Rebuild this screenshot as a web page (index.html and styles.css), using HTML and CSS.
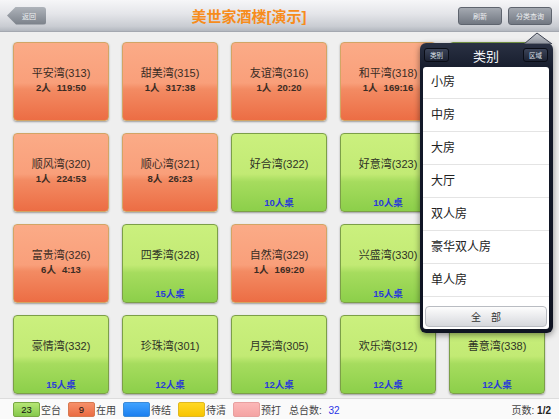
FILE: index.html
```html
<!DOCTYPE html>
<html>
<head>
<meta charset="utf-8">
<link rel="stylesheet" href="styles.css">
</head>
<body>
<div class="app">
  <header class="topbar">
    <div class="back-btn">返回</div>
    <div class="title">美世家酒楼[演示]</div>
    <div class="btn">刷新</div>
    <div class="btn">分类查询</div>
  </header>

  <main class="grid">
    <div class="tile busy"><div class="name">平安湾(313)</div><div class="info">2人<span class="time">119:50</span></div></div>
    <div class="tile busy"><div class="name">甜美湾(315)</div><div class="info">1人<span class="time">317:38</span></div></div>
    <div class="tile busy"><div class="name">友谊湾(316)</div><div class="info">1人<span class="time">20:20</span></div></div>
    <div class="tile busy"><div class="name">和平湾(318)</div><div class="info">1人<span class="time">169:16</span></div></div>
    <div class="tile free"></div>

    <div class="tile busy"><div class="name">顺风湾(320)</div><div class="info">1人<span class="time">224:53</span></div></div>
    <div class="tile busy"><div class="name">顺心湾(321)</div><div class="info">8人<span class="time">26:23</span></div></div>
    <div class="tile free"><div class="name">好合湾(322)</div><div class="seats">10人桌</div></div>
    <div class="tile free"><div class="name">好意湾(323)</div><div class="seats">10人桌</div></div>
    <div class="tile free"></div>

    <div class="tile busy"><div class="name">富贵湾(326)</div><div class="info">6人<span class="time">4:13</span></div></div>
    <div class="tile free"><div class="name">四季湾(328)</div><div class="seats">15人桌</div></div>
    <div class="tile busy"><div class="name">自然湾(329)</div><div class="info">1人<span class="time">169:20</span></div></div>
    <div class="tile free"><div class="name">兴盛湾(330)</div><div class="seats">15人桌</div></div>
    <div class="tile free"></div>

    <div class="tile free"><div class="name">豪情湾(332)</div><div class="seats">15人桌</div></div>
    <div class="tile free"><div class="name">珍珠湾(301)</div><div class="seats">12人桌</div></div>
    <div class="tile free"><div class="name">月亮湾(305)</div><div class="seats">12人桌</div></div>
    <div class="tile free"><div class="name">欢乐湾(312)</div><div class="seats">12人桌</div></div>
    <div class="tile free"><div class="name">善意湾(338)</div><div class="seats">12人桌</div></div>
  </main>

  <footer class="legend">
    <div class="lg-item"><span class="lg-box lg-green">23</span><span class="lg-label">空台</span></div>
    <div class="lg-item"><span class="lg-box lg-orange">9</span><span class="lg-label">在用</span></div>
    <div class="lg-item"><span class="lg-box lg-blue"></span><span class="lg-label">待结</span></div>
    <div class="lg-item"><span class="lg-box lg-yellow"></span><span class="lg-label">待清</span></div>
    <div class="lg-item"><span class="lg-box lg-pink"></span><span class="lg-label">预打</span></div>
    <div class="lg-total">总台数: <span class="lg-num">32</span></div>
    <div class="lg-page">页数: <b>1/2</b></div>
  </footer>

  <div class="popover">
    <svg class="pop-arrow" width="30" height="12" viewBox="0 0 30 12">
      <defs>
        <linearGradient id="ag" x1="0" y1="0" x2="0" y2="1">
          <stop offset="0" stop-color="#c9ccd2"/>
          <stop offset="1" stop-color="#8f949d"/>
        </linearGradient>
      </defs>
      <polygon points="1,12 14,1 29,12" fill="url(#ag)" stroke="#3c4250" stroke-width="1"/>
    </svg>
    <div class="pop-head">
      <div class="pop-btn">类别</div>
      <div class="pop-title">类别</div>
      <div class="pop-btn">区域</div>
    </div>
    <div class="pop-body">
      <ul class="pop-list">
        <li>小房</li>
        <li>中房</li>
        <li>大房</li>
        <li>大厅</li>
        <li>双人房</li>
        <li>豪华双人房</li>
        <li>单人房</li>
      </ul>
      <div class="pop-all">全　部</div>
    </div>
  </div>
</div>
</body>
</html>
```

FILE: styles.css
```css
* { box-sizing: border-box; }
html, body { margin: 0; padding: 0; }
body {
  font-family: "Liberation Sans", "Noto Sans CJK SC", sans-serif;
  color: #333;
  background: #efefef;
}
.app {
  position: relative;
  width: 559px;
  height: 419px;
  overflow: hidden;
  display: flex;
  flex-direction: column;
  background: #efefef;
}

/* top bar */
.topbar {
  height: 32px;
  flex: none;
  display: flex;
  align-items: center;
  padding: 0 7px 0 7px;
  background: linear-gradient(#f6f6f8 0%, #e4e5e9 45%, #c9ccd2 85%, #b3b7bf 100%);
  border-bottom: 1px solid #a4a8b0;
}
.back-btn {
  width: 39px;
  height: 18px;
  display: flex;
  align-items: center;
  justify-content: center;
  padding-left: 5px;
  font-size: 7px;
  color: #eef0f2;
  background: linear-gradient(#aeb3ba, #7a8089);
  clip-path: polygon(0 50%, 9px 0, 100% 0, 100% 100%, 9px 100%);
  border-radius: 0 3px 3px 0;
}
.title {
  flex: 1;
  text-align: center;
  font-size: 15px;
  font-weight: bold;
  color: #f78c1c;
  letter-spacing: 0;
}
.btn {
  width: 44px;
  height: 18px;
  margin-left: 6px;
  display: flex;
  align-items: center;
  justify-content: center;
  font-size: 7px;
  color: #eceef0;
  border: 1px solid #5e646e;
  border-radius: 3px;
  background: linear-gradient(#a4a9b1, #727882);
}

/* grid */
.grid {
  flex: 1;
  display: grid;
  grid-template-columns: repeat(5, 96px);
  grid-template-rows: repeat(4, 79px);
  column-gap: 13px;
  row-gap: 12px;
  padding: 10px 13px 0 13px;
  align-content: start;
}
.tile {
  border-radius: 4px;
  display: flex;
  flex-direction: column;
  align-items: center;
  padding-top: 23px;
  box-shadow: 0 1px 2px rgba(0,0,0,0.35);
}
.tile.busy {
  border: 1px solid #d2a565;
  background: linear-gradient(#fbab87 0%, #f99f7a 52%, #f38b63 60%, #ec6d44 100%);
}
.tile.free {
  border: 1px solid #7c9f48;
  background: linear-gradient(#cbf07e 0%, #c2ea74 52%, #a6dc5e 62%, #8ccf4a 100%);
}
.name {
  font-size: 11px;
  line-height: 14px;
  color: #3a2c24;
}
.tile.free .name { color: #2f3326; }
.info {
  margin-top: 2px;
  font-size: 9.5px;
  line-height: 12px;
  font-weight: bold;
  color: #3a2c24;
}
.time { margin-left: 6px; }
.seats {
  margin-top: auto;
  margin-bottom: 2px;
  font-size: 9.5px;
  line-height: 12px;
  font-weight: bold;
  color: #2a3bd8;
}

/* legend */
.legend {
  height: 21px;
  flex: none;
  display: flex;
  align-items: center;
  padding: 0 8px 0 13px;
  background: #fafafa;
  border-top: 1px solid #dcdcdc;
  font-size: 10px;
  color: #444;
}
.lg-item {
  display: flex;
  align-items: center;
  margin-right: 6px;
}
.lg-box {
  width: 27px;
  height: 15px;
  border-radius: 2px;
  display: flex;
  align-items: center;
  justify-content: center;
  font-size: 9.5px;
  color: #111;
}
.lg-green { background: linear-gradient(#b6e675, #86c94c); border: 1px solid #79a843; }
.lg-orange { background: linear-gradient(#f6906a, #ea6c43); border: 1px solid #d77950; }
.lg-blue { background: linear-gradient(#3fa2ff, #1b7ff0); border: 1px solid #3a8ad8; }
.lg-yellow { background: linear-gradient(#ffd824, #f8c400); border: 1px solid #e0b820; }
.lg-pink { background: linear-gradient(#fbb8b8, #f5a3a3); border: 1px solid #e8a0a0; }
.lg-label {
  margin-left: 1px;
  width: 21px;
}
.lg-total { margin-left: 1px; }
.lg-num { color: #2a35e6; margin-left: 4px; }
.lg-page { margin-left: auto; }
.lg-page b { color: #222; }

/* popover */
.popover {
  position: absolute;
  left: 420px;
  top: 43px;
  width: 133px;
  height: 290px;
  padding: 0 4px 4px 3px;
  border-radius: 6px;
  background: linear-gradient(#2a3143 0%, #141a2a 10%, #0e1322 100%);
  box-shadow: 0 2px 6px rgba(0,0,0,0.45);
  display: flex;
  flex-direction: column;
}
.pop-arrow {
  position: absolute;
  top: -11px;
  left: 103px;
}
.pop-head {
  height: 24px;
  flex: none;
  display: flex;
  align-items: center;
  justify-content: space-between;
  padding: 0 1px 0 1px;
}
.pop-btn {
  width: 25px;
  height: 14px;
  border-radius: 3px;
  display: flex;
  align-items: center;
  justify-content: center;
  font-size: 6.5px;
  color: #dfe3ea;
  background: linear-gradient(#3c4458, #1c2232);
  border: 1px solid #0a0d16;
}
.pop-title {
  font-size: 13px;
  color: #f2f4f8;
}
.pop-body {
  flex: 1;
  background: #fff;
  border-radius: 3px;
  display: flex;
  flex-direction: column;
}
.pop-list {
  list-style: none;
  margin: 0;
  padding: 0;
}
.pop-list li {
  height: 33px;
  line-height: 32px;
  padding-left: 8px;
  font-size: 12px;
  color: #222;
  border-bottom: 1px solid #e4e4e4;
}
.pop-list li:first-child { height: 32px; line-height: 31px; }
.pop-all {
  margin: 9px 2px 0 2px;
  height: 21px;
  border-radius: 4px;
  border: 1px solid #b9bcc2;
  background: linear-gradient(#fdfdfd, #e6e7ea 60%, #d6d8dc);
  display: flex;
  align-items: center;
  justify-content: center;
  font-size: 10px;
  color: #333;
}
```
